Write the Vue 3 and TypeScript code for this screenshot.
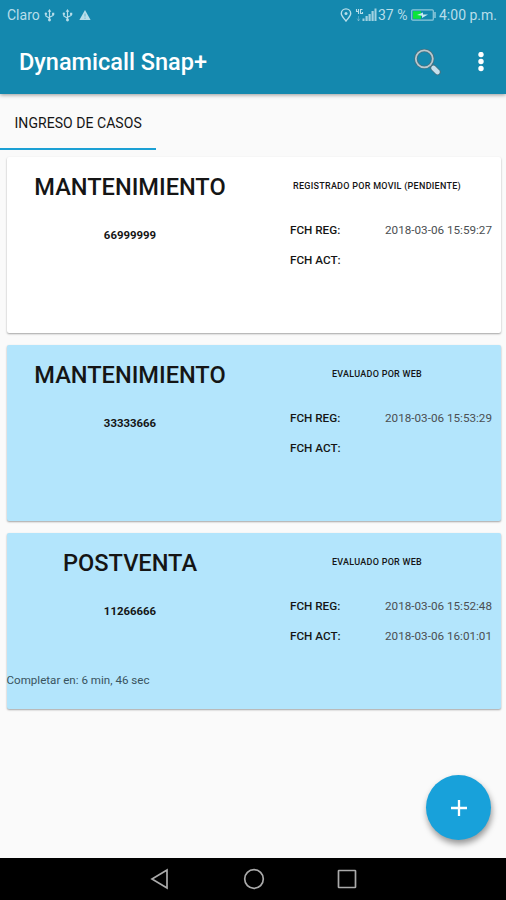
<script setup lang="ts">
interface CaseItem {
  title: string
  code: string
  status: string
  registered: string
  updated: string
  remaining: string
  pending: boolean
}

const cases: CaseItem[] = [
  { title: 'MANTENIMIENTO', code: '66999999', status: 'REGISTRADO POR MOVIL (PENDIENTE)', registered: '2018-03-06 15:59:27', updated: '', remaining: '', pending: true },
  { title: 'MANTENIMIENTO', code: '33333666', status: 'EVALUADO POR WEB', registered: '2018-03-06 15:53:29', updated: '', remaining: '', pending: false },
  { title: 'POSTVENTA', code: '11266666', status: 'EVALUADO POR WEB', registered: '2018-03-06 15:52:48', updated: '2018-03-06 16:01:01', remaining: 'Completar en: 6 min, 46 sec', pending: false },
]
</script>

<template>
  <div class="screen">
    <header class="header">
      <div class="status-bar">
        <div class="status-left">
          <span class="carrier">Claro</span>
          <svg v-for="n in 2" :key="n" class="usb" viewBox="0 0 12 14">
            <path d="M6 2v10M2 5v2.5L6 10M10 5v2L6 9" fill="none" stroke="currentColor" stroke-width="1.3" />
            <path d="M6 0l2 3H4z" fill="currentColor" />
            <circle cx="6" cy="12" r="1.6" fill="currentColor" />
            <circle cx="2" cy="5" r="1.3" fill="currentColor" />
            <rect x="8.8" y="4" width="2.4" height="2.4" fill="currentColor" />
          </svg>
          <svg class="warning" viewBox="0 0 12 12">
            <path d="M6 1l5.6 10H.4z" fill="currentColor" />
            <path d="M6 4.6v3M6 8.6v1.2" stroke="#1488ae" stroke-width=".5" />
          </svg>
        </div>
        <div class="status-right">
          <svg class="pin" viewBox="0 0 12 14">
            <path d="M6 13C3.6 10 1.3 8 1.3 5.6a4.7 4.7 0 0 1 9.4 0C10.7 8 8.4 10 6 13z" fill="none" stroke="currentColor" stroke-width="1.4" />
            <circle cx="6" cy="5.6" r="1.5" fill="currentColor" />
          </svg>
          <svg class="signal" viewBox="0 0 22 14">
            <path d="M1.500 1v2.500h2M3.500 1v5M7.500 1.500H5.500v4h2V4" fill="none" stroke="currentColor" stroke-width="1.100" />
            <path d="M3.500 8v5M2 10.500L3.500 13 5 10.500" fill="none" stroke="currentColor" stroke-opacity=".35" />
            <path d="M7.500 10.500h2V13h-2zM10.500 8h2.200v5h-2.200zM13.500 6h2.200v7h-2.200zM16.500 3h2.200v10h-2.200zM19.500 .500h2V13h-2z" fill="currentColor" fill-opacity=".85" />
          </svg>
          <span class="percent">37 %</span>
          <svg class="battery" viewBox="0 0 25 12">
            <rect x=".7" y=".8" width="21.600" height="10.400" rx="1" fill="none" stroke="currentColor" stroke-opacity=".75" stroke-width="1.200" />
            <rect x="2" y="2.200" width="8" height="7.600" fill="#0be53c" />
            <path d="M6 6l6-2.500V5.500h5l-6 3.500V6.800z" fill="#c7eaf1" />
            <path d="M24 3v6" stroke="currentColor" stroke-opacity=".75" stroke-width="1.500" />
          </svg>
          <span class="clock">4:00 p.m.</span>
        </div>
      </div>
      <div class="toolbar">
        <h1 class="app-title">Dynamicall Snap+</h1>
        <button class="tool search" aria-label="Buscar">
          <svg viewBox="0 0 28 28" width="28" height="28">
            <path d="M16 17l3 3" stroke="#4c6c77" stroke-width="3" />
            <path d="M19.500 20l4 4" stroke="#47707f" stroke-width="6.400" stroke-linecap="round" />
            <path d="M19.500 20l4 4" stroke="#c5e0ed" stroke-width="4.600" stroke-linecap="round" />
            <circle cx="10.300" cy="10.800" r="8.500" fill="none" stroke="#47707f" stroke-width="3.300" />
            <circle cx="10.300" cy="10.800" r="8.500" fill="none" stroke="#b9c9cf" stroke-width="1.800" />
          </svg>
        </button>
        <button class="tool more" aria-label="Más opciones">
          <svg viewBox="0 0 6 20" width="6" height="20">
            <circle cx="3" cy="2.500" r="2.700" fill="#fff" />
            <circle cx="3" cy="9.500" r="2.700" fill="#fff" />
            <circle cx="3" cy="16.500" r="2.700" fill="#fff" />
          </svg>
        </button>
      </div>
    </header>

    <nav class="tabs">
      <div class="tab"><span>INGRESO DE CASOS</span></div>
    </nav>

    <main class="case-list">
      <article v-for="item in cases" :key="item.code" class="card" :class="{ pending: item.pending }">
        <div class="summary">
          <h2>{{ item.title }}</h2>
          <p class="code">{{ item.code }}</p>
          <p class="remaining">{{ item.remaining }}</p>
        </div>
        <div class="details">
          <p class="state">{{ item.status }}</p>
          <dl>
            <div class="row"><dt>FCH REG:</dt><dd>{{ item.registered }}</dd></div>
            <div class="row"><dt>FCH ACT:</dt><dd>{{ item.updated }}</dd></div>
          </dl>
        </div>
      </article>
      <button class="fab" aria-label="Agregar caso">
        <svg viewBox="0 0 18 18" width="18" height="18">
          <path d="M9 1v16M1 9h16" stroke="#fff" stroke-width="2.300" />
        </svg>
      </button>
    </main>

    <footer class="nav-bar">
      <svg viewBox="0 0 20 22" width="20" height="22"><path d="M17 2v18L2 11z" /></svg>
      <svg viewBox="0 0 22 22" width="22" height="22"><circle cx="11" cy="11" r="9.300" /></svg>
      <svg viewBox="0 0 20 20" width="20" height="20"><rect x="1.500" y="1.500" width="17" height="17" rx=".5" /></svg>
    </footer>
  </div>
</template>

<style>
body {
  margin: 0;
  background: #fafafa;
}
</style>

<style scoped>
* {
  box-sizing: border-box;
}
.screen {
  display: flex;
  flex-direction: column;
  width: 506px;
  height: 900px;
  overflow: hidden;
  background: #fafafa;
  font-family: Roboto, "Liberation Sans", sans-serif;
  color: #151515;
}
h1, h2, p, dl, dd {
  margin: 0;
}
button {
  border: 0;
  padding: 0;
  background: none;
}
svg {
  display: block;
  flex: none;
}
.header {
  height: 94px;
  flex: none;
  background: #1488ae;
  box-shadow: 0 1px 4px rgba(0, 0, 0, .4);
}
.status-bar {
  display: flex;
  justify-content: space-between;
  height: 30px;
  padding: 0 9px 0 7px;
  color: #b8deea;
  font-size: 14px;
  line-height: 30px;
}
.status-left, .status-right {
  display: flex;
  align-items: center;
}
.carrier {
  width: 37px;
}
.usb {
  width: 11px;
  height: 13px;
  margin-right: 7px;
}
.warning {
  width: 12px;
  height: 12px;
  margin-left: -1px;
}
.pin {
  width: 12px;
  height: 14px;
  margin-right: 3px;
}
.signal {
  width: 22px;
  height: 14px;
  margin-right: 1px;
}
.percent {
  width: 33px;
  white-space: nowrap;
}
.battery {
  width: 25px;
  height: 12px;
  margin-right: 3px;
}
.clock {
  white-space: nowrap;
}
.toolbar {
  display: flex;
  align-items: center;
  height: 64px;
  padding: 0 22px 0 19px;
}
.app-title {
  flex: 1;
  color: #fff;
  font-size: 23.5px;
  font-weight: 500;
  line-height: 30px;
}
.more {
  margin-left: 36px;
}
.tabs {
  display: flex;
  flex: none;
  height: 56px;
}
.tab {
  display: flex;
  width: 156px;
  padding: 21px 0 0 14.5px;
  border-bottom: 2px solid #1ba0d4;
  font-size: 14px;
  letter-spacing: .05px;
  line-height: 16px;
  white-space: nowrap;
}
.case-list {
  position: relative;
  display: flex;
  flex: 1;
  flex-direction: column;
  gap: 12px;
  padding: 7px 5.5px 0 6.5px;
}
.card {
  display: grid;
  grid-template-columns: 247px 247px;
  height: 176px;
  border-radius: 2px;
  background: #b3e5fc;
  box-shadow: 0 1px 2px rgba(0, 0, 0, .35);
}
.card.pending {
  background: #fff;
}
.summary {
  display: flex;
  flex-direction: column;
  align-items: center;
}
h2 {
  margin-top: 16px;
  font-size: 23.6px;
  font-weight: 500;
  line-height: 28px;
}
.code {
  margin-top: 27px;
  font-size: 11.4px;
  font-weight: 700;
  line-height: 14px;
}
.remaining {
  align-self: stretch;
  margin-top: 54.5px;
  color: #39535e;
  font-size: 11.6px;
  line-height: 14px;
}
.state {
  margin-top: 24px;
  font-size: 9px;
  font-weight: 500;
  letter-spacing: .27px;
  line-height: 10px;
  text-align: center;
  white-space: nowrap;
}
dl {
  display: grid;
  gap: 15.5px;
  margin-top: 32px;
  padding: 0 8.5px 0 36.5px;
}
.row {
  display: flex;
  justify-content: space-between;
  font-size: 11.7px;
  line-height: 14px;
}
dt {
  font-weight: 500;
}
dd {
  color: #4b4f52;
}
.fab {
  position: absolute;
  right: 15px;
  bottom: 18px;
  display: grid;
  place-items: center;
  width: 65px;
  height: 65px;
  border-radius: 50%;
  background: #18a1da;
  box-shadow: 1px 4px 6px rgba(0, 0, 0, .4);
}
.nav-bar {
  display: flex;
  flex: none;
  align-items: center;
  justify-content: space-between;
  height: 42px;
  padding: 0 149px 0 150px;
  background: #000;
}
.nav-bar svg {
  fill: none;
  stroke: #aaa;
  stroke-width: 1.7;
}
</style>
